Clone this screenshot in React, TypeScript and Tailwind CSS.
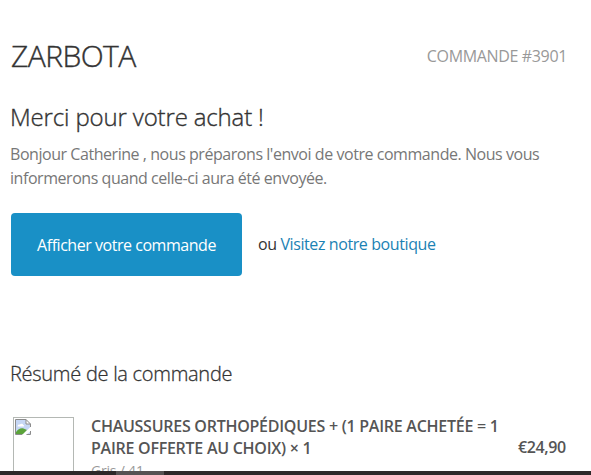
import React from 'react';

const BrokenImage: React.FC = () => (
  <svg width="16" height="16" viewBox="0 0 16 16" className="block">
    <path d="M0.5 0.5H11L15.5 5V15.5H0.5Z" fill="#c6d7f5" />
    <path d="M2.5 7.5C2.5 5.8 4 5.2 5 5.6C5.6 4.2 8 4.4 8.2 6C9.4 6 9.6 7.5 8.6 7.5Z" fill="#fff" />
    <path d="M1 15V13C3 10 6 8.5 8.5 9.5L12 11L8 15.5H1Z" fill="#5ba33a" />
    <path d="M11 0.5V5H15.5" fill="#fff" stroke="#8c8c8c" />
    <path d="M16 7.5L7 16H11L16 12Z" fill="#fff" />
    <path d="M15.5 8V5L11 0.5H0.5V15.5H7M11.5 15.5H15.5V12" fill="none" stroke="#8c8c8c" />
  </svg>
);

const Header: React.FC = () => (
  <header className="flex h-[41px] items-center justify-between">
    <h1 className="-mt-0.5 ml-px text-[30px] leading-[41px] font-light tracking-[-0.55px] text-[#333] [-webkit-text-stroke:0.4px_#333]">
      ZARBOTA
    </h1>
    <span className="-mt-0.5 text-base leading-6 tracking-[-0.35px] text-[#999]">COMMANDE #3901</span>
  </header>
);

const OrderItem: React.FC = () => (
  <div className="mt-7 flex">
    <div className="mt-px ml-[3px] h-[62px] w-[61px] shrink-0 border border-[#b4b8b4] p-px">
      <BrokenImage />
    </div>
    <div className="-mt-px ml-[17px] w-[427px] shrink-0">
      <p className="text-base leading-[22px] font-semibold tracking-[-0.26px] whitespace-nowrap text-[#555]">
        CHAUSSURES ORTHOPÉDIQUES + (1 PAIRE ACHETÉE = 1
        <br />
        PAIRE OFFERTE AU CHOIX) × 1
      </p>
      <p className="text-sm leading-6 tracking-[-0.2px] text-[#999]">Gris / 41</p>
    </div>
    <p className="mt-[19px] text-base leading-6 font-semibold tracking-[-0.4px] text-[#555]">€24,90</p>
  </div>
);

const App: React.FC = () => {
  return (
    <main className="relative h-[475px] w-[591px] overflow-hidden bg-white pt-9 pr-6 pl-[10px] font-['Open_Sans',sans-serif]">
      <Header />
      <h2 className="mt-6 text-2xl leading-8 font-light tracking-[-0.15px] text-[#333] [-webkit-text-stroke:0.35px_#333]">
        Merci pour votre achat !
      </h2>
      <p className="mt-[9px] text-base leading-6 tracking-[-0.45px] whitespace-nowrap text-[#777]">
        Bonjour Catherine , nous préparons l'envoi de votre commande. Nous vous
        <br />
        informerons quand celle-ci aura été envoyée.
      </p>
      <div className="mt-[23px] flex h-[63px] items-center">
        <a
          href="#"
          className="ml-px flex h-[63px] w-[231px] items-center justify-center rounded bg-[#1990c6] text-base tracking-[-0.46px] whitespace-nowrap text-white"
        >
          Afficher votre commande
        </a>
        <p className="-mt-0.5 ml-4 text-base tracking-[-0.4px] whitespace-nowrap text-[#333]">
          ou{' '}
          <a href="#" className="text-[#1b82b4]">
            Visitez notre boutique
          </a>
        </p>
      </div>
      <h3 className="mt-[84px] text-xl leading-7 font-light tracking-[-0.28px] text-[#333] [-webkit-text-stroke:0.3px_#333]">
        Résumé de la commande
      </h3>
      <OrderItem />
      <div className="absolute inset-x-0 bottom-0 h-1 bg-[#2d2829]">
        <div className="ml-[116px] h-1 w-12 bg-[#565253]" />
      </div>
    </main>
  );
};

export default App;
